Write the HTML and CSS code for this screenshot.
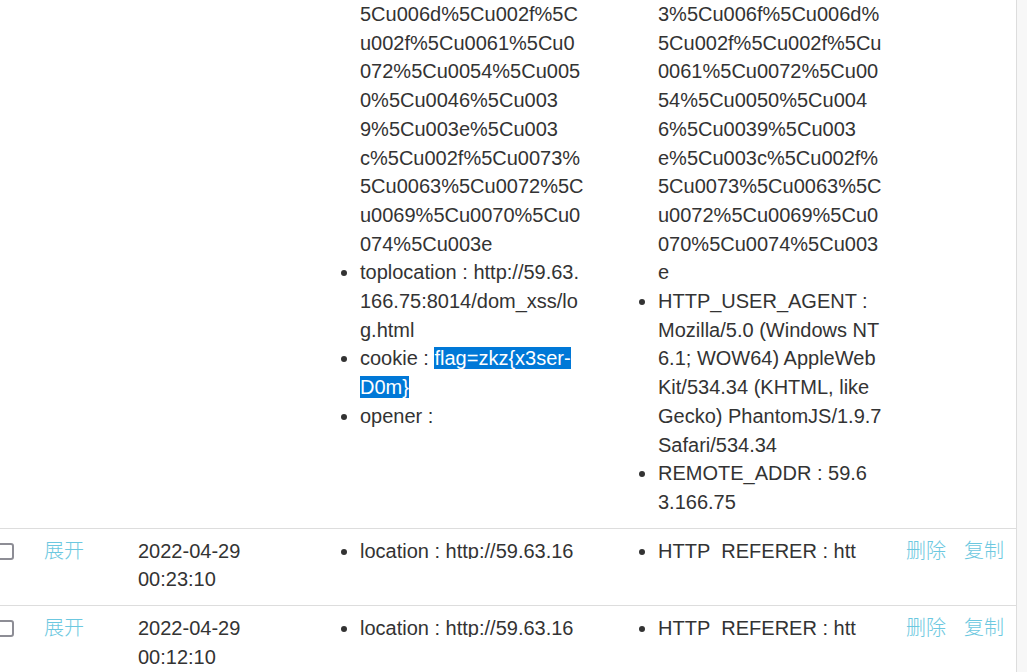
FILE: index.html
```html
<!DOCTYPE html>
<html lang="zh-CN">
<head>
<meta charset="utf-8">
<title>日志</title>
<link rel="stylesheet" href="styles.css">
</head>
<body>
<div class="panel">
  <table class="log">
    <colgroup>
      <col class="c-check"><col class="c-toggle"><col class="c-time"><col class="c-data"><col class="c-data"><col class="c-act">
    </colgroup>
    <tbody>
      <tr class="open">
        <td class="cell-check"></td>
        <td></td>
        <td></td>
        <td>
          <ul class="vals">
            <li class="cont">5Cu006d%5Cu002f%5Cu002f%5Cu0061%5Cu0072%5Cu0054%5Cu0050%5Cu0046%5Cu0039%5Cu003e%5Cu003c%5Cu002f%5Cu0073%5Cu0063%5Cu0072%5Cu0069%5Cu0070%5Cu0074%5Cu003e</li>
            <li>toplocation : http://59.63.166.75:8014/dom_xss/log.html</li>
            <li>cookie : <span class="hl">flag=zkz{x3ser-D0m}</span></li>
            <li>opener : </li>
          </ul>
        </td>
        <td>
          <ul class="vals">
            <li class="cont">3%5Cu006f%5Cu006d%5Cu002f%5Cu002f%5Cu0061%5Cu0072%5Cu0054%5Cu0050%5Cu0046%5Cu0039%5Cu003e%5Cu003c%5Cu002f%5Cu0073%5Cu0063%5Cu0072%5Cu0069%5Cu0070%5Cu0074%5Cu003e</li>
            <li>HTTP_USER_AGENT : Mozilla/5.0 (Windows NT 6.1; WOW64) AppleWebKit/534.34 (KHTML, like Gecko) PhantomJS/1.9.7 Safari/534.34</li>
            <li>REMOTE_ADDR : 59.63.166.75</li>
          </ul>
        </td>
        <td class="acts"></td>
      </tr>
      <tr>
        <td class="cell-check"><span class="check"></span></td>
        <td><a class="link">展开</a></td>
        <td>2022-04-29 00:23:10</td>
        <td><div class="preview"><ul class="vals"><li>location : http://59.63.16</li></ul></div></td>
        <td><div class="preview"><ul class="vals"><li>HTTP_REFERER : htt</li></ul></div></td>
        <td class="acts"><a class="link">删除</a><a class="link">复制</a></td>
      </tr>
      <tr>
        <td class="cell-check"><span class="check"></span></td>
        <td><a class="link">展开</a></td>
        <td>2022-04-29 00:12:10</td>
        <td><div class="preview"><ul class="vals"><li>location : http://59.63.16</li></ul></div></td>
        <td><div class="preview"><ul class="vals"><li>HTTP_REFERER : htt</li></ul></div></td>
        <td class="acts"><a class="link">删除</a><a class="link">复制</a></td>
      </tr>
    </tbody>
  </table>
</div>
</body>
</html>
```
FILE: styles.css
```css
html, body {
  margin: 0;
  padding: 0;
}
body {
  height: 672px;
  overflow: hidden;
  background: #f7f7f7;
  font-family: "Liberation Sans", "Noto Sans CJK SC", sans-serif;
  font-size: 20px;
  line-height: 28.7px;
  color: #333;
}
.panel {
  width: 1016px;
  height: 672px;
  overflow: hidden;
  background: #fff;
  border-right: 1px solid #ddd;
}
.log {
  width: 1016px;
  table-layout: fixed;
  border-collapse: collapse;
  margin-top: -9px;
}
.c-check { width: 36px; }
.c-toggle { width: 94px; }
.c-time { width: 168px; }
.c-data { width: 298px; }
.c-act { width: 122px; }
.log td {
  vertical-align: top;
  padding: 8px 8px 11px 8px;
  border-top: 1px solid #ddd;
}
.log tr.open td {
  padding-top: 8px;
}
.log td.cell-check {
  padding-left: 0;
}
.log td.acts {
  padding-left: 12px;
}
.check {
  display: block;
  box-sizing: border-box;
  width: 17px;
  height: 17px;
  margin: 6px 0 0 -3px;
  border: 2px solid #8d8d95;
  border-radius: 3px;
  background: #fff;
}
.link {
  color: #6cc8e0;
  font-weight: 300;
  text-decoration: none;
  cursor: pointer;
}
.acts .link + .link {
  margin-left: 18px;
}
.vals {
  margin: 0;
  padding: 0 0 0 54px;
  width: 224.3px;
  word-break: break-all;
}
.vals li.cont {
  list-style-type: none;
}
.preview {
  height: 22.5px;
  overflow: hidden;
}
.hl {
  background: #0078d7;
  color: #fff;
}
```
